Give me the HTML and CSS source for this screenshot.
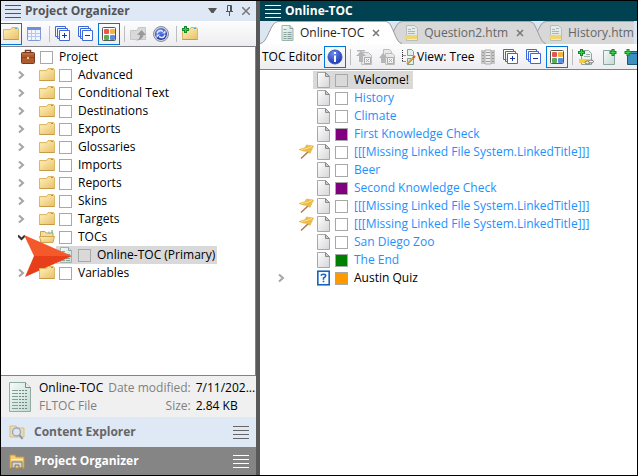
FILE: index.html
```html
<!DOCTYPE html>
<html lang="en">
<head>
<meta charset="utf-8">
<title>Online-TOC</title>
<link rel="stylesheet" href="styles.css">
</head>
<body>
<svg class="defs" aria-hidden="true">
  <defs>
    <linearGradient id="gold" x1="0" y1="0" x2="1" y2="1"><stop offset="0" stop-color="#ffeeb5"/><stop offset="1" stop-color="#e8c16a"/></linearGradient>
    <linearGradient id="paper" x1="0" y1="0" x2="1" y2="1"><stop offset="0" stop-color="#fff"/><stop offset="1" stop-color="#d5d5d8"/></linearGradient>
    <linearGradient id="green" x1="0" y1="0" x2="1" y2="1"><stop offset="0" stop-color="#f4fbf8"/><stop offset="1" stop-color="#c3dad2"/></linearGradient>
    <radialGradient id="ball" cx=".4" cy=".25" r=".8"><stop offset="0" stop-color="#6f8df0"/><stop offset="1" stop-color="#1530a8"/></radialGradient>
  </defs>
  <symbol id="folder" viewBox="0 0 16 16"><path d="M.5 3.500H7.500L9 1.500H14.500L15.500 3V13.500H.5Z" fill="#f5dc94" stroke="#dcb765"/><path d="M1 4.500H8.500L10 3.500H15V13H1Z" fill="url(#gold)"/><path d="M.5 13.500H15.500" stroke="#c79a48"/><path d="M12 2.500h2" stroke="#37b4dc"/></symbol>
  <symbol id="folder-open" viewBox="0 0 16 16"><path d="M1.500 13V2.500H6l1 1.500h7v3" fill="#f3dda0" stroke="#cba14c"/><path d="M10 2.500V5" stroke="#6fb7d0"/><path d="M13 1v3" stroke="#2fae79"/><path d="M.5 7.500H15.500L14 13.500H2Z" fill="url(#gold)" stroke="#d0a655"/></symbol>
  <symbol id="chevron" viewBox="0 0 7 10"><path d="M1 1.500 5 5 1 8.500" fill="none" stroke="#a5a5a5" stroke-width="2"/></symbol>
  <symbol id="menu" viewBox="0 0 16 15"><path d="M0 1.500H16M0 5.500H16M0 9.500H16M0 13.500H16" stroke="currentColor"/></symbol>
  <symbol id="page" viewBox="0 0 13 16"><path d="M.5.500H8.500L12.500 4.500V15.500H.5Z" fill="url(#paper)" stroke="#a8a8a8"/><path d="M8.500.500V4.500H12.500Z" fill="#ccc" stroke="#8b8b8b"/></symbol>
  <symbol id="toc" viewBox="0 0 12 16"><path d="M.5.500H8.500L11.500 3.500V15.500H.5Z" fill="url(#green)" stroke="#9db5ae"/><path d="M2 4.500H5M2 7.500H5M2 9.500H5M2 11.500H5M2 13.500H5M6 7.500H10M6 9.500H10M6 11.500H10M6 13.500H10" stroke="#8ba29c"/><path d="M8.500.500V3.500H11.500" fill="#d6e5e0" stroke="#8ba49d"/></symbol>
  <symbol id="topic" viewBox="0 0 13 16"><path d="M1.500.500H9.500L12.500 3.500V15.500H1.500Z" fill="#e6ebea" stroke="#b4bfbd"/><path d="M3 4.500H6M7 3.500H10M3 6.500H10M3 8.500H10" stroke="#aab6b4"/><path d="M0 10H12V14H0Z" fill="#f1d66f"/></symbol>
  <symbol id="plus-stack" viewBox="0 0 16 16"><path d="M3.500 10.500H.5V.500H10.500V3M5 12.500H2.500V2.500H12.500V5" fill="none" stroke="#3c68d8"/><path d="M4.500 4.500H14.500V14.500H4.500Z" fill="#fff" stroke="#3c68d8"/><path d="M7 9.500H12M9.500 7V12" stroke="#1736a0"/></symbol>
  <symbol id="minus-stack" viewBox="0 0 16 16"><path d="M3.500 10.500H.5V.500H10.500V3M5 12.500H2.500V2.500H12.500V5" fill="none" stroke="#3c68d8"/><path d="M4.500 4.500H14.500V14.500H4.500Z" fill="#fff" stroke="#3c68d8"/><path d="M7 9.500H12" stroke="#1736a0"/></symbol>
  <symbol id="colors" viewBox="0 0 16 16"><rect x="1.500" y="1.500" width="13" height="13" rx="1" fill="#fff" stroke="#555"/><rect x="3" y="3" width="5" height="5" rx="1" fill="#e8574c"/><rect x="9" y="3" width="5" height="5" rx="1" fill="#f2b43e"/><rect x="3" y="9" width="5" height="5" rx="1" fill="#5bac55"/><rect x="9" y="9" width="5" height="5" rx="1" fill="#5b8ce0"/></symbol>
  <symbol id="quiz" viewBox="0 0 12 14"><rect x=".75" y=".75" width="10.500" height="12.500" fill="#fff" stroke="#1666be" stroke-width="1.500"/><path d="M4 5V4.500Q4 3.500 6 3.500T8 5Q8 6 6 7V8.500M6 9.500V11" fill="none" stroke="#1666be" stroke-width="1.500"/></symbol>
  <symbol id="flag" viewBox="0 0 16 16"><path d="M3 14.500 11 7" stroke="#b07a4c" stroke-width="1.500"/><path d="M1 5.500 7 3.500 8.500 1 15.500 2 12 9.500 9.500 7.500 5 7Z" fill="#ecbc48" stroke="#dba93a" stroke-width=".5"/><path d="M3 5.500 9 4.500 14 2.500" fill="none" stroke="#ffe085"/></symbol>
  <symbol id="gray-up" viewBox="0 0 16 16"><path d="M5.500 3.500H12.500L15.500 6.500V15.500H5.500Z" fill="#e8e8e8" stroke="#bdbdbd"/><path d="M1 1H9V2.500H1ZM5 2 10 7H7V13H3V7H0Z" fill="#b5b5b5"/><path d="M8.500 8.500H14.500V14.500H8.500ZM10 10 13 13M13 10 10 13" fill="#f2f2f2" stroke="#ababab"/></symbol>
  <symbol id="gray-up-all" viewBox="0 0 16 16"><path d="M4.500 6V.500H10.500L12.500 2.500V5M6.500 4.500H13.500L15.500 6.500V15.500H6.500Z" fill="#e8e8e8" stroke="#bdbdbd"/><path d="M4 4 8.500 9H6V14H2V9H0Z" fill="#b5b5b5"/><path d="M8.500 8.500H14.500V14.500H8.500ZM10 10 13 13M13 10 10 13" fill="#f2f2f2" stroke="#ababab"/></symbol>
</svg>

<main class="window">
  <aside class="sidebar">
    <header class="panel-head">
      <svg class="menu-icon"><use href="#menu"/></svg>
      <h2>Project Organizer</h2>
      <button class="bare" aria-label="Options"><svg viewBox="0 0 9 6" width="9" height="6"><path d="M0 0H9L5.500 5H3.500Z" fill="#555"/></svg></button>
      <button class="bare" aria-label="Pin"><svg viewBox="0 0 9 12" width="9" height="12"><path d="M2.500 6V.500H6.500V6M5.500 1V6M1 6.500H8M4.500 7V11" fill="none" stroke="#555"/></svg></button>
      <button class="bare" aria-label="Close"><svg viewBox="0 0 8 8" width="8" height="8"><path d="M0 0 8 8M8 0 0 8" stroke="#777" stroke-width="1.500"/></svg></button>
    </header>
    <div class="toolbar side-tools">
      <button class="tool on" aria-label="Show folders"><svg class="i16"><use href="#folder"/></svg></button>
      <button class="tool" aria-label="Show files"><svg class="i16" viewBox="0 0 16 16"><rect x="1.500" y="1.500" width="13" height="13" rx="1" fill="#f1f5ff" stroke="#7d98d8"/><path d="M1 1H15V4H1Z" fill="#6f8fd8"/><path d="M2 7.500H14M2 10.500H14M5.500 4V14M9.500 4V14" stroke="#b8c8ec"/></svg></button>
      <span class="sep"></span>
      <button class="tool" aria-label="Expand all"><svg class="i16"><use href="#plus-stack"/></svg></button>
      <button class="tool" aria-label="Collapse all"><svg class="i16"><use href="#minus-stack"/></svg></button>
      <button class="tool on" aria-label="Show indicators"><svg class="i16"><use href="#colors"/></svg></button>
      <span class="sep"></span>
      <button class="tool" aria-label="Open"><svg class="i16" viewBox="0 0 16 16"><path d="M.5 4.500H7L8.500 1.500H15.500V13.500H.5Z" fill="#d9d9d9" stroke="#c6c6c6"/><path d="M5 15Q10 14 10 9H7L11.500 4 16 9H13.500Q13 14 5 15Z" fill="#999"/></svg></button>
      <button class="tool" aria-label="Refresh"><svg class="i16" viewBox="0 0 16 16"><circle cx="8" cy="8" r="7.500" fill="#d3d5da" stroke="#8b8d92"/><circle cx="8" cy="8" r="6" fill="url(#ball)"/><path d="M4 7.500Q5 4 8 4.500L10 5.500M12 8.500Q11 12 8 11.500L6 10.500" fill="none" stroke="#dfe9ff" stroke-width="1.500"/><path d="M9 7.500H12.500V4ZM7 8.500H3.500V12Z" fill="#dfe9ff"/></svg></button>
      <span class="sep"></span>
      <button class="tool" aria-label="New folder"><svg class="i16" viewBox="0 0 16 16"><use href="#folder"/><path d="M3.500 0V7M0 3.500H7" stroke="#178b2c" stroke-width="3"/><path d="M3.500 1V6M1 3.500H6" stroke="#42cd50"/></svg></button>
    </div>

    <div class="tree-box">
      <ul class="tree">
        <li><div class="row"><div class="item"><svg class="i16" viewBox="0 0 16 16"><path d="M5.500 4V1.500H10.500V4" fill="none" stroke="#6f3a21" stroke-width="1.500"/><rect x="1.500" y="3.500" width="13" height="11" rx="1" fill="#ae5b32" stroke="#7b3b22"/><path d="M2 8.500H14" stroke="#8a4426"/><path d="M2 5H14" stroke="#ca7b4b"/><path d="M7 8H9V10H7Z" fill="#edc77c"/></svg><input type="checkbox" id="p0"><label for="p0">Project</label></div></div>
          <ul>
            <li><div class="row"><svg class="chev"><use href="#chevron"/></svg><div class="item"><svg class="i16"><use href="#folder"/></svg><input type="checkbox" id="p1"><label for="p1">Advanced</label></div></div></li>
            <li><div class="row"><svg class="chev"><use href="#chevron"/></svg><div class="item"><svg class="i16"><use href="#folder"/></svg><input type="checkbox" id="p2"><label for="p2">Conditional Text</label></div></div></li>
            <li><div class="row"><svg class="chev"><use href="#chevron"/></svg><div class="item"><svg class="i16"><use href="#folder"/></svg><input type="checkbox" id="p3"><label for="p3">Destinations</label></div></div></li>
            <li><div class="row"><svg class="chev"><use href="#chevron"/></svg><div class="item"><svg class="i16"><use href="#folder"/></svg><input type="checkbox" id="p4"><label for="p4">Exports</label></div></div></li>
            <li><div class="row"><svg class="chev"><use href="#chevron"/></svg><div class="item"><svg class="i16"><use href="#folder"/></svg><input type="checkbox" id="p5"><label for="p5">Glossaries</label></div></div></li>
            <li><div class="row"><svg class="chev"><use href="#chevron"/></svg><div class="item"><svg class="i16"><use href="#folder"/></svg><input type="checkbox" id="p6"><label for="p6">Imports</label></div></div></li>
            <li><div class="row"><svg class="chev"><use href="#chevron"/></svg><div class="item"><svg class="i16"><use href="#folder"/></svg><input type="checkbox" id="p7"><label for="p7">Reports</label></div></div></li>
            <li><div class="row"><svg class="chev"><use href="#chevron"/></svg><div class="item"><svg class="i16"><use href="#folder"/></svg><input type="checkbox" id="p8"><label for="p8">Skins</label></div></div></li>
            <li><div class="row"><svg class="chev"><use href="#chevron"/></svg><div class="item"><svg class="i16"><use href="#folder"/></svg><input type="checkbox" id="p9"><label for="p9">Targets</label></div></div></li>
            <li><div class="row"><svg class="chev" viewBox="0 0 7 10"><path d="M0 3.500 3.500 7 7 3.500" fill="none" stroke="#333" stroke-width="2"/></svg><div class="item"><svg class="i16"><use href="#folder-open"/></svg><input type="checkbox" id="p10"><label for="p10">TOCs</label></div></div>
              <ul class="deep">
                <li><div class="row"><span class="chev"></span><div class="item selected"><svg class="i16"><use href="#toc"/></svg><input type="checkbox" id="p11"><label for="p11">Online-TOC (Primary)</label></div>
                  <svg class="pointer" viewBox="0 0 48 42"><path d="M0 0 48 21H10Z" fill="#f4592b"/><path d="M1 42 48 21H10Z" fill="#e63f19"/></svg></div></li>
              </ul>
            </li>
            <li><div class="row"><svg class="chev"><use href="#chevron"/></svg><div class="item"><svg class="i16"><use href="#folder"/></svg><input type="checkbox" id="p12"><label for="p12">Variables</label></div></div></li>
          </ul>
        </li>
      </ul>
    </div>

    <section class="details">
      <svg class="file-icon" viewBox="0 0 22 30"><path d="M.5.500H16.500L21.500 5.500V29.500H.5Z" fill="url(#green)" stroke="#91aaa3"/><path d="M16.500.500V5.500H21.500" fill="#e8f3ef" stroke="#738e87"/><path d="M3 8.500H9M3 11.500H9M3 14.500H9M3 17.500H9M3 20.500H9M3 23.500H9M3 26.500H9" stroke="#84a098"/><path d="M10 8.500H19M10 11.500H19M10 14.500H19M10 17.500H19M10 20.500H19M10 23.500H19M10 26.500H19" stroke="#6f8882" stroke-dasharray="2 1"/></svg>
      <div class="facts">
        <span>Online-TOC</span><span class="key">Date modified:</span><span class="val">7/11/202...</span>
        <span class="dim">FLTOC File</span><span class="key">Size:</span><span class="val">2.84 KB</span>
      </div>
    </section>
    <button class="switch"><svg class="i16" viewBox="0 0 16 16"><path d="M1 2H7L8 4H15V13H1Z" fill="#eadbb3" stroke="#d2bf8f"/><circle cx="7.500" cy="8" r="4" fill="#dce6f2" stroke="#9daab9" stroke-width="1.500"/><path d="M10.500 11 13.500 15" stroke="#8c97a5" stroke-width="2"/></svg><span>Content Explorer</span><svg class="menu-icon"><use href="#menu"/></svg></button>
    <button class="switch current"><svg class="i16" viewBox="0 0 16 16"><path d="M1 15V2H6L7 4H15V15Z" fill="#f3ce79" stroke="#c7963c"/><path d="M2 6.500H14" stroke="#fff1bd"/><path d="M3 15V9H13V15H10V12H6V15Z" fill="#d6d6d6" stroke="#777"/></svg><span>Project Organizer</span><svg class="menu-icon"><use href="#menu"/></svg></button>
  </aside>

  <div class="splitter"></div>

  <section class="editor">
    <header class="doc-head"><svg class="menu-icon"><use href="#menu"/></svg><h1>Online-TOC</h1></header>
    <nav class="tabs">
      <div class="tab active">
        <svg class="edge-l" viewBox="0 0 18 23"><path d="M0 23C8 23 10 .5 18 .5V23Z"/><path class="line" d="M0 22.500C8 22.500 10 .5 18 .5"/></svg>
        <div class="tab-body"><svg class="tab-icon"><use href="#toc"/></svg><a href="#toc-list">Online-TOC</a><button class="bare" aria-label="Close tab"><svg viewBox="0 0 8 8" width="8" height="8"><path d="M1 1 7 7M7 1 1 7" stroke="#777" stroke-width="1.500"/></svg></button></div>
        <svg class="edge-r" viewBox="0 0 16 23"><path d="M0 .5C7 .5 9 23 16 23H0Z"/><path class="line" d="M0 .5C7 .5 9 22.500 16 22.500"/></svg>
      </div>
      <div class="tab second">
        <svg class="edge-l" viewBox="0 0 18 23"><path d="M0 23C8 23 10 .5 18 .5V23Z"/><path class="line" d="M0 22.500C8 22.500 10 .5 18 .5"/></svg>
        <div class="tab-body"><svg class="tab-icon"><use href="#topic"/></svg><a href="#toc-list">Question2.htm</a><button class="bare" aria-label="Close tab"><svg viewBox="0 0 8 8" width="8" height="8"><path d="M1 1 7 7M7 1 1 7" stroke="#777" stroke-width="1.500"/></svg></button></div>
        <svg class="edge-r" viewBox="0 0 16 23"><path d="M0 .5C7 .5 9 23 16 23H0Z"/><path class="line" d="M0 .5C7 .5 9 22.500 16 22.500"/></svg>
      </div>
      <div class="tab third">
        <svg class="edge-l" viewBox="0 0 18 23"><path d="M0 23C8 23 10 .5 18 .5V23Z"/><path class="line" d="M0 22.500C8 22.500 10 .5 18 .5"/></svg>
        <div class="tab-body"><svg class="tab-icon"><use href="#topic"/></svg><a href="#toc-list">History.htm</a></div>
      </div>
    </nav>
    <div class="toolbar">
      <span class="tool-label">TOC Editor</span>
      <button class="tool on" aria-label="Information"><svg class="i16" viewBox="0 0 16 16"><circle cx="8" cy="8" r="7" fill="url(#ball)" stroke="#315bc6"/><path d="M8 3V5M8 6.500V13" stroke="#fff" stroke-width="2"/></svg></button>
      <span class="sep"></span>
      <button class="tool" aria-label="Move up"><svg class="i16"><use href="#gray-up"/></svg></button>
      <button class="tool" aria-label="Move all up"><svg class="i16"><use href="#gray-up-all"/></svg></button>
      <button class="tool wide"><svg class="i16" viewBox="0 0 16 16"><path d="M2.500 1V13M2.500 6.500H6M2.500 12.500H6" fill="none" stroke="#333" stroke-dasharray="1 1"/><path d="M7.500.500H11.500L13.500 2.500V6.500H7.500ZM7.500 9.500H13.500V15.500H7.500Z" fill="#e1eeea" stroke="#84a198"/><path d="M7 15 14 8" stroke="#ba8028" stroke-width="2"/><path d="M7 14.500 13.500 8" stroke="#ffd657"/><path d="M13 9 15 7" stroke="#d0564a" stroke-width="2"/></svg><span>View: Tree</span></button>
      <button class="tool" aria-label="Columns"><svg class="i16" viewBox="0 0 16 16"><path d="M1 1H15V15H1Z" fill="#c7c7c7"/><path d="M5 1H11V15H5Z" fill="#eee" stroke="#aaa"/><path d="M2 3.500H4M2 6.500H4M2 9.500H4M2 12.500H4M6 3.500H10M6 6.500H10M6 9.500H10M6 12.500H10M12 3.500H14M12 6.500H14M12 9.500H14M12 12.500H14" stroke="#9b9b9b"/></svg></button>
      <button class="tool" aria-label="Expand all"><svg class="i16"><use href="#plus-stack"/></svg></button>
      <button class="tool" aria-label="Collapse all"><svg class="i16"><use href="#minus-stack"/></svg></button>
      <button class="tool on" aria-label="Show indicators"><svg class="i16"><use href="#colors"/></svg></button>
      <span class="sep"></span>
      <button class="tool" aria-label="New topic link"><svg class="i16" viewBox="0 0 16 16"><path d="M3.500 1.500H10.500L13.500 4.500V15.500H3.500Z" fill="#e9f2ef" stroke="#8fa49e"/><path d="M8 5.500H12M6 7.500H12" stroke="#9bb0aa"/><path d="M1 10H11V14H1Z" fill="#f6cf3d"/><ellipse cx="9.500" cy="13.500" rx="2.500" ry="1.500" fill="#eee" stroke="#777"/><ellipse cx="13" cy="12.500" rx="2.500" ry="1.500" fill="#eee" stroke="#777"/><path d="M3.500 0V7M0 3.500H7" stroke="#178b2c" stroke-width="3"/><path d="M3.500 1V6M1 3.500H6" stroke="#46ce50"/></svg></button>
      <button class="tool" aria-label="New topic"><svg class="i16" viewBox="0 0 16 16"><path d="M2.500 1.500H13.500V15.500H2.500Z" fill="url(#green)" stroke="#89a79d"/><path d="M12 0V7M8.500 3.500H15.500" stroke="#178b2c" stroke-width="3"/><path d="M12 1V6M9.500 3.500H14.500" stroke="#46ce50"/></svg></button>
      <button class="tool" aria-label="New book"><svg class="i16" viewBox="0 0 16 16"><path d="M3.500 2.500H15.500V15.500H3.500Z" fill="#3d8fbd" stroke="#1d5878"/><path d="M4 4.500H16" stroke="#1d5878"/><path d="M4 0V7M.5 3.500H7.500" stroke="#178b2c" stroke-width="3"/><path d="M4 1V6M1.500 3.500H6.500" stroke="#46ce50"/></svg></button>
    </div>

    <ul class="toc" id="toc-list">
      <li class="row"><span class="chev"></span><span class="mark"></span><div class="item selected"><svg class="doc"><use href="#page"/></svg><input type="checkbox" id="t1"><label for="t1">Welcome!</label></div></li>
      <li class="row"><span class="chev"></span><span class="mark"></span><div class="item link"><svg class="doc"><use href="#page"/></svg><input type="checkbox" id="t2"><label for="t2">History</label></div></li>
      <li class="row"><span class="chev"></span><span class="mark"></span><div class="item link"><svg class="doc"><use href="#page"/></svg><input type="checkbox" id="t3"><label for="t3">Climate</label></div></li>
      <li class="row"><span class="chev"></span><span class="mark"></span><div class="item link"><svg class="doc"><use href="#page"/></svg><input type="checkbox" class="purple" id="t4"><label for="t4">First Knowledge Check</label></div></li>
      <li class="row"><span class="chev"></span><svg class="mark"><use href="#flag"/></svg><div class="item link"><svg class="doc"><use href="#page"/></svg><input type="checkbox" id="t5"><label for="t5">[[[Missing Linked File System.LinkedTitle]]]</label></div></li>
      <li class="row"><span class="chev"></span><span class="mark"></span><div class="item link"><svg class="doc"><use href="#page"/></svg><input type="checkbox" id="t6"><label for="t6">Beer</label></div></li>
      <li class="row"><span class="chev"></span><span class="mark"></span><div class="item link"><svg class="doc"><use href="#page"/></svg><input type="checkbox" class="purple" id="t7"><label for="t7">Second Knowledge Check</label></div></li>
      <li class="row"><span class="chev"></span><svg class="mark"><use href="#flag"/></svg><div class="item link"><svg class="doc"><use href="#page"/></svg><input type="checkbox" id="t8"><label for="t8">[[[Missing Linked File System.LinkedTitle]]]</label></div></li>
      <li class="row"><span class="chev"></span><svg class="mark"><use href="#flag"/></svg><div class="item link"><svg class="doc"><use href="#page"/></svg><input type="checkbox" id="t9"><label for="t9">[[[Missing Linked File System.LinkedTitle]]]</label></div></li>
      <li class="row"><span class="chev"></span><span class="mark"></span><div class="item link"><svg class="doc"><use href="#page"/></svg><input type="checkbox" id="t10"><label for="t10">San Diego Zoo</label></div></li>
      <li class="row"><span class="chev"></span><span class="mark"></span><div class="item link"><svg class="doc"><use href="#page"/></svg><input type="checkbox" class="green" id="t11"><label for="t11">The End</label></div></li>
      <li class="row"><svg class="chev"><use href="#chevron"/></svg><span class="mark"></span><div class="item"><svg class="doc"><use href="#quiz"/></svg><input type="checkbox" class="orange" id="t12"><label for="t12">Austin Quiz</label></div></li>
    </ul>
  </section>
</main>
</body>
</html>
```
FILE: styles.css
```css
* { box-sizing: border-box; }
body {
  margin: 0;
  background: #fff;
  color: #000;
  font: 12px/18px "Open Sans", "Noto Sans", sans-serif;
}
svg { display: block; flex: none; }
.defs { position: absolute; width: 0; height: 0; }
ul { list-style: none; margin: 0; padding: 0; }
h1, h2 { margin: 0; font-size: 12px; line-height: 18px; }
button {
  display: flex;
  align-items: center;
  justify-content: center;
  padding: 0;
  border: 0;
  background: none;
  color: inherit;
  font: inherit;
}
a { color: inherit; text-decoration: none; }

.window {
  display: grid;
  grid-template-columns: 255px 4px minmax(0, 1fr);
  min-height: 100vh;
  border: 1px solid #000;
}
.splitter { background: #585858; }
.sidebar, .editor {
  display: flex;
  flex-direction: column;
  min-width: 0;
  overflow: hidden;
}

.menu-icon { width: 16px; height: 15px; }
.i16 { width: 16px; height: 16px; }

.panel-head {
  display: flex;
  align-items: center;
  gap: 8px;
  height: 20px;
  padding: 0 6px 0 4px;
  background: #dfe8f5;
  color: #555;
}
.panel-head h2 { flex: 1; margin-left: -4px; }

.toolbar {
  display: flex;
  align-items: center;
  gap: 1px;
  height: 26px;
  border-bottom: 1px solid #82828a;
  background: linear-gradient(#fdfdfe, #ededf0);
  white-space: nowrap;
}
.side-tools { margin-left: -1px; }
.tool { flex: none; width: 22px; height: 22px; }
.tool.on { border: 1px solid #0078d7; }
.tool.wide { width: auto; gap: 1px; padding: 0 1px; }
.tool-label { padding: 0 1px 0 2px; }
.sep {
  flex: none;
  width: 1px;
  height: 16px;
  margin: 0 1px 0 3px;
  background: #bdbdc0;
}

.tree-box {
  flex: 1;
  padding: 1px 0 0 17px;
  border-right: 1px solid #82828a;
  border-bottom: 1px solid #82828a;
}
.deep { padding-left: 19px; }
.row {
  position: relative;
  display: flex;
  align-items: center;
  height: 18px;
}
.row .chev { width: 7px; height: 10px; margin-right: 12px; flex: none; }
.item {
  display: flex;
  align-items: center;
  height: 18px;
  padding: 0 2px;
  white-space: nowrap;
}
.item input {
  appearance: none;
  flex: none;
  width: 13px;
  height: 13px;
  margin: 0 6px 0 4px;
  border: 1px solid #a8a8a8;
}
.selected { background: #d9d9d9; }
.link { color: #1e90ff; }
.purple { background: #800080; }
.green { background: #008000; }
.orange { background: #ff9900; }
.pointer {
  position: absolute;
  left: -13px;
  top: -11px;
  width: 48px;
  height: 42px;
}

.details {
  display: flex;
  align-items: center;
  gap: 8px;
  height: 41px;
  padding: 0 4px 0 8px;
  background: #f0f0f0;
}
.file-icon { width: 22px; height: 30px; }
.facts {
  flex: 1;
  display: grid;
  grid-template-columns: auto 1fr auto;
  column-gap: 5px;
  white-space: nowrap;
}
.dim, .key { color: #808080; }
.key { text-align: right; }

.switch {
  justify-content: flex-start;
  gap: 9px;
  height: 30px;
  padding: 0 7px 0 8px;
  background: #dfe8f5;
  color: #666;
  font-weight: bold;
}
.switch span { flex: 1; text-align: left; }
.current { height: 28px; background: #858585; color: #fff; }

.doc-head {
  display: flex;
  align-items: center;
  gap: 4px;
  height: 20px;
  padding-left: 5px;
  background: #004152;
  color: #fff;
}
.tabs {
  display: flex;
  height: 23px;
  overflow: hidden;
  background: #dce6f2;
}
.tab {
  position: relative;
  display: flex;
  flex: none;
  color: #666;
  fill: #d8d8d8;
}
.tab.active { z-index: 2; color: #222; fill: #fff; }
.tab.second { z-index: 1; margin-left: -18px; }
.tab.third { margin-left: -18px; }
.edge-l { width: 18px; height: 23px; }
.edge-r { width: 16px; height: 23px; }
.line { fill: none; stroke: #9b9b9b; }
.tab-body {
  display: flex;
  align-items: center;
  gap: 6px;
  height: 23px;
  padding: 0 6px 0 3px;
  border-top: 1px solid #a5a5a5;
  background: #d8d8d8;
}
.active .tab-body { background: #fff; }
.tab-icon { width: 13px; height: 16px; }
.tab .bare { margin-left: 2px; }
.third .tab-body { padding-right: 0; }

.toc { padding: 1px 0 0 18px; }
.toc .row .chev { margin-right: 13px; }
.mark { flex: none; width: 16px; height: 16px; }
.doc { width: 13px; height: 16px; }
.toc .item { padding: 0 4px; margin-left: -1px; }
.toc .item input { margin-left: 5px; }
```
